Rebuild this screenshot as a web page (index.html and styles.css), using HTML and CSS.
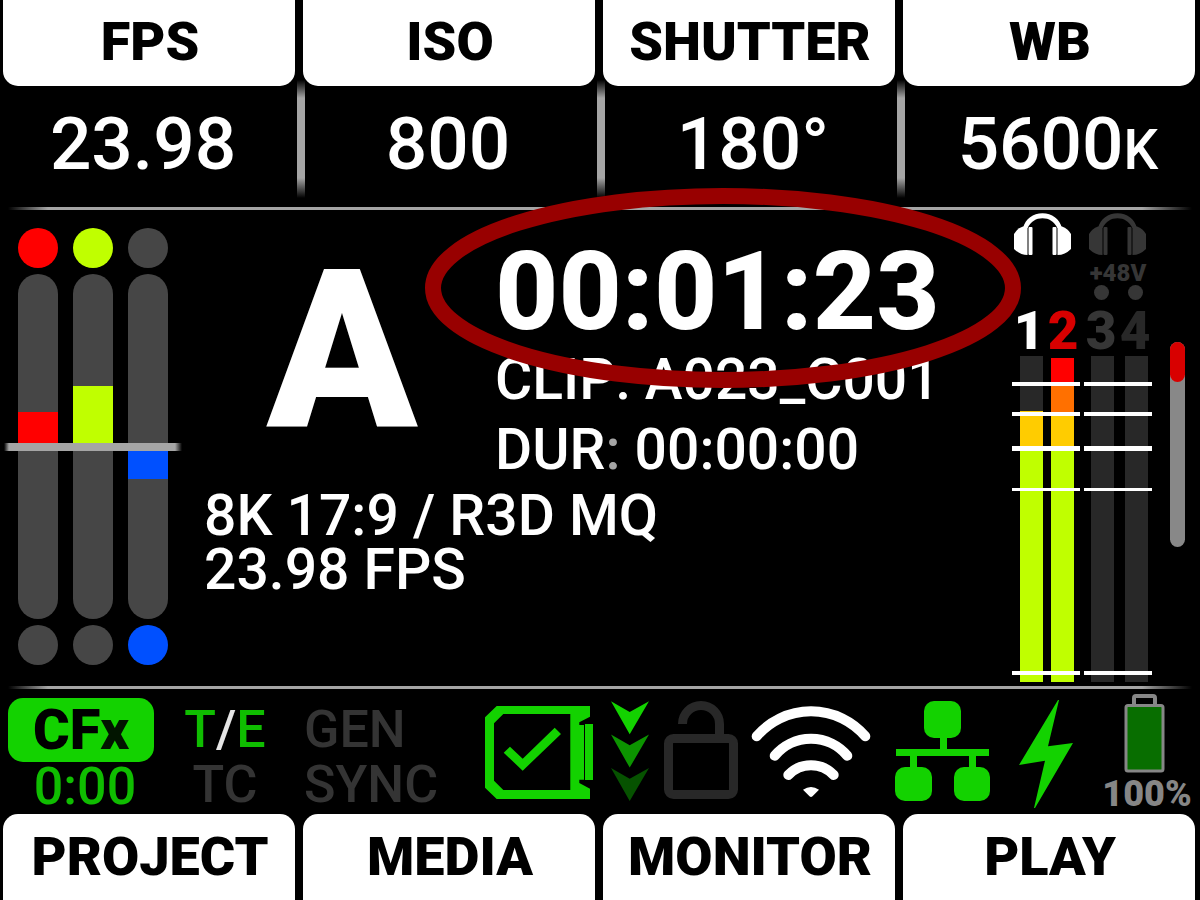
FILE: index.html
```html
<!DOCTYPE html>
<html lang="en">
<head>
  <meta charset="UTF-8" />
  <title>Camera Display</title>
  <link rel="stylesheet" href="styles.css">
</head>
<body>
  <header class="top">
    <nav class="tabs tabs-top">
      <button>FPS</button>
      <button>ISO</button>
      <button>SHUTTER</button>
      <button>WB</button>
    </nav>
    <div class="values">
      <div>23.98</div>
      <div>800</div>
      <div>180°</div>
      <div>5600<small>K</small></div>
    </div>
  </header>
  <div class="line"></div>

  <main>
    <!-- RGB exposure meters -->
    <section class="rgb">
      <div class="meter red">
        <span class="dot on"></span>
        <div class="track">
          <div class="half up"><i style="height: 20%"></i></div>
          <div class="half"></div>
        </div>
        <span class="dot"></span>
      </div>
      <div class="meter green">
        <span class="dot on"></span>
        <div class="track">
          <div class="half up"><i style="height: 35%"></i></div>
          <div class="half"></div>
        </div>
        <span class="dot"></span>
      </div>
      <div class="meter blue">
        <span class="dot"></span>
        <div class="track">
          <div class="half up"></div>
          <div class="half"><i style="height: 19%"></i></div>
        </div>
        <span class="dot on"></span>
      </div>
      <div class="zero"></div>
    </section>

    <section class="center">
      <div class="hero">
        <div class="camera">A</div>
        <div class="clip">
          <div class="timecode">00:01:23</div>
          <div>CLIP: A023_C001</div>
          <div>DUR<span class="dim">:</span> 00:00:00</div>
          <svg class="ring" viewBox="0 0 596 200">
            <ellipse cx="298" cy="100" rx="290" ry="92" fill="none" stroke="#980000" stroke-width="16" />
          </svg>
        </div>
      </div>
      <div class="format">8K 17:9 / R3D MQ<br>23.98 FPS</div>
    </section>

    <!-- audio levels -->
    <section class="audio">
      <div class="pair">
        <svg class="phones" viewBox="0 0 62 46" fill="currentColor">
          <path d="M11 18C13.5 9 21 3.3 30.5 3.3S47.5 9 50 18L45.5 18C42 11.5 37 8.3 30.5 8.3S19 11.5 15.5 18Z" />
          <path d="M2 24Q5 18.5 11 16.5L15.5 16V45Q8 45 2 39Z" />
          <path d="M59 24Q56 18.5 50 16.5L45.5 16V45Q53 45 59 39Z" />
          <rect x="16.5" y="17" width="4" height="28" rx="1" />
          <rect x="40.5" y="17" width="4" height="28" rx="1" />
        </svg>
        <div class="phantom"></div>
        <div class="nums"><span>1</span><span class="peak">2</span></div>
        <div class="bars">
          <div class="bar mid"></div>
          <div class="bar high"></div>
          <div class="ticks"><i></i><i></i><i></i><i></i><i></i></div>
        </div>
      </div>
      <div class="pair off">
        <svg class="phones" viewBox="0 0 62 46" fill="currentColor">
          <path d="M11 18C13.5 9 21 3.3 30.5 3.3S47.5 9 50 18L45.5 18C42 11.5 37 8.3 30.5 8.3S19 11.5 15.5 18Z" />
          <path d="M2 24Q5 18.5 11 16.5L15.5 16V45Q8 45 2 39Z" />
          <path d="M59 24Q56 18.5 50 16.5L45.5 16V45Q53 45 59 39Z" />
          <rect x="16.5" y="17" width="4" height="28" rx="1" />
          <rect x="40.5" y="17" width="4" height="28" rx="1" />
        </svg>
        <div class="phantom">
          +48V
          <div class="leds"><i></i><i></i></div>
        </div>
        <div class="nums"><span>3</span><span class="faint">4</span></div>
        <div class="bars">
          <div class="bar"></div>
          <div class="bar"></div>
          <div class="ticks"><i></i><i></i><i></i><i></i><i></i></div>
        </div>
      </div>
    </section>
    <div class="scroll"><div class="thumb"></div></div>
  </main>

  <div class="line"></div>
  <footer>
    <div class="status">
      <div class="storage">
        <div class="badge">CF<span>x</span></div>
        <div class="remain">0:00</div>
      </div>
      <div class="sync">
        <div class="te">T<span>/</span>E</div>
        <div class="gen">GEN</div>
        <div>TC</div>
        <div class="gen">SYNC</div>
      </div>
      <div class="icons">
        <!-- media card -->
        <svg width="114" height="115" viewBox="0 0 114 115" fill="#13d200">
          <path fill-rule="evenodd" d="M11.7 9H105V19.7L94.3 25.3V28H99V82.7H94.3V86L105 91.7V102H11.7L0 90.7V20.3ZM18.3 17L9 26.3V83.7L18.3 93H85.3V17Z" />
          <rect x="100" y="27" width="8" height="56" />
          <path d="M18.7 55.7L25 49.7L37.7 61.7L69.7 30.7L76 37L37.7 73.7Z" />
        </svg>
        <!-- data flow -->
        <svg width="40" height="115" viewBox="0 0 40 115">
          <path fill="#13d200" d="M0 4.3L18.7 15L38 4.3L18.7 37.3Z" />
          <path fill="#0c9400" d="M0 37.6L18.7 48.3L38 37.6L18.7 70.6Z" />
          <path fill="#065200" d="M0 71L18.7 81.7L38 71L18.7 104Z" />
        </svg>
        <!-- unlocked -->
        <svg width="76" height="115" viewBox="0 0 76 115" fill="none" stroke="#282828" stroke-width="9">
          <rect x="5.5" y="41.5" width="65" height="56" rx="5" />
          <path d="M19.5 27A18.5 18.5 0 0 1 56.5 27V41" />
        </svg>
        <!-- wifi -->
        <svg width="124" height="115" viewBox="0 0 124 115" fill="none" stroke="#fff" stroke-width="10" stroke-linecap="round">
          <path d="M5.7 39.3A71.5 71.5 0 0 1 114.3 39.3" />
          <path d="M23.7 58.7A47.3 47.3 0 0 1 96.3 58.7" />
          <path d="M37.3 78A31.4 31.4 0 0 1 82.7 78" />
          <path fill="#fff" stroke="none" d="M52 92.7Q60 87.3 68 92.7L61.5 99.3Q60 100.7 58.5 99.3Z" />
        </svg>
        <!-- network -->
        <svg width="112" height="115" viewBox="0 0 112 115" fill="#13d200">
          <rect x="37" y="4" width="37" height="37" rx="10" />
          <rect x="53" y="40" width="7" height="13" />
          <rect x="9" y="52" width="93" height="7" />
          <rect x="23" y="58" width="7" height="13" />
          <rect x="82" y="58" width="7" height="13" />
          <rect x="8" y="70" width="37" height="34" rx="10" />
          <rect x="67" y="70" width="36" height="34" rx="10" />
        </svg>
        <!-- power -->
        <svg width="74" height="115" viewBox="0 0 74 115" fill="#13d200">
          <path d="M47 3H48L37 49.3L62 46L24 111H23L34 63.7L8 68Z" />
        </svg>
        <div class="battery">
          <svg width="46" height="80" viewBox="0 0 46 80" stroke="#868686">
            <path d="M10 13V5Q10 3 12 3H29Q31 3 31 5V13" fill="none" stroke-width="4" />
            <rect x="2" y="12.5" width="37" height="65.5" rx="2" fill="#086e00" stroke-width="3" />
          </svg>
          <div>100%</div>
        </div>
      </div>
    </div>
    <nav class="tabs tabs-bottom">
      <button>PROJECT</button>
      <button>MEDIA</button>
      <button>MONITOR</button>
      <button>PLAY</button>
    </nav>
  </footer>
</body>
</html>
```
FILE: styles.css
```css
* {
  box-sizing: border-box;
}
body {
  margin: 0;
  min-height: 100vh;
  display: flex;
  flex-direction: column;
  background: #000;
  color: #fff;
  font-family: Roboto, sans-serif;
  font-weight: 500;
}
svg {
  display: block;
}

/* tabs */
.tabs {
  display: grid;
  grid-template-columns: repeat(4, 1fr);
  gap: 8px;
  padding: 0 5px 0 3px;
}
.tabs button {
  height: 86px;
  padding: 0 0 2px 2px;
  border: none;
  background: #fff;
  color: #000;
  font-family: inherit;
  font-size: 54px;
  font-weight: 900;
  cursor: pointer;
}
.tabs-top button {
  padding-bottom: 4px;
  border-radius: 0 0 15px 15px;
}
.tabs-bottom button {
  border-radius: 15px 15px 0 0;
}

/* values under the top tabs, with the faded dividers behind them */
.top {
  --fade: linear-gradient(transparent, #a5a5a5 18px, #a5a5a5 98px, transparent);
  background:
    var(--fade) calc(25% - 1px) 80px / 8px 118px no-repeat,
    var(--fade) calc(50% + 1px) 80px / 8px 118px no-repeat,
    var(--fade) calc(75% + 3px) 80px / 8px 118px no-repeat;
}
.values {
  display: grid;
  grid-template-columns: repeat(4, 1fr);
  gap: 25px;
  padding: 0 2px 5px 3px;
  font-size: 73px;
  line-height: 116px;
  text-align: center;
}
.values small {
  font-size: 55px;
  line-height: 1;
}
.line {
  height: 3px;
  margin: 0 8px;
  background: linear-gradient(to right, transparent, #a5a5a5 40px, #a5a5a5 calc(100% - 50px), transparent);
}

main {
  flex: 1;
  display: flex;
  padding: 0 15px 0 18px;
}

/* rgb meters */
.rgb {
  position: relative;
  display: flex;
  gap: 15px;
  padding: 18px 0 21px;
}
.meter {
  display: flex;
  flex-direction: column;
  gap: 6px;
  width: 40px;
}
.dot {
  height: 40px;
  border-radius: 50%;
  background: #464646;
}
.track {
  flex: 1;
  display: flex;
  flex-direction: column;
  border-radius: 20px;
  background: #464646;
  overflow: hidden;
}
.half {
  flex: 1;
  display: flex;
  flex-direction: column;
}
.half.up {
  justify-content: flex-end;
}
.red .on, .red i { background: #f00; }
.green .on, .green i { background: #c0ff00; }
.blue .on, .blue i { background: #0050ff; }
.zero {
  position: absolute;
  left: -14px;
  right: -14px;
  top: 233px;
  height: 8px;
  background: linear-gradient(to right, transparent, #a5a5a5 5px, #a5a5a5 calc(100% - 7px), transparent);
}

/* clip info */
.center {
  flex: 1;
  margin-left: 36px;
  padding-top: 32px;
  font-size: 57px;
  white-space: nowrap;
}
.hero {
  display: flex;
  gap: 15px;
}
.camera {
  width: 276px;
  font-size: 221px;
  font-weight: 900;
  line-height: 218px;
  text-align: center;
}
.clip {
  position: relative;
  line-height: 70px;
}
.timecode {
  margin-bottom: 3px;
  font-size: 110px;
  font-weight: 800;
  line-height: 100px;
}
.dim {
  color: #a5a5a5;
}
.ring {
  position: absolute;
  left: -70px;
  top: -54px;
  width: 596px;
  height: 200px;
}
.format {
  margin-top: 4px;
  line-height: 54px;
}

/* audio */
.audio {
  display: flex;
  gap: 4px;
}
.pair {
  width: 68px;
}
.pair.off {
  color: #363636;
}
.phones {
  width: 62px;
  height: 46px;
}
.off .phones {
  margin-left: 3px;
}
.phantom {
  height: 50px;
  padding-top: 5px;
  font-size: 24px;
  font-weight: 900;
  line-height: 24px;
  text-align: center;
}
.leds, .nums {
  display: grid;
  grid-template-columns: 1fr 1fr;
  justify-items: center;
}
.leds i {
  width: 15px;
  height: 15px;
  border-radius: 50%;
  background: currentColor;
}
.nums {
  font-size: 53px;
  font-weight: 900;
  line-height: 50px;
}
.peak {
  color: #d80000;
}
.faint {
  color: #282828;
}
.bars {
  position: relative;
  display: flex;
  gap: 8px;
  height: 326px;
  padding-left: 8px;
}
.off .bars {
  gap: 11px;
  padding-left: 7px;
}
.bar {
  width: 23px;
  background: #282828;
}
.bar.mid {
  background: linear-gradient(#282828 55px, #ffcc00 55px 93px, #c0ff00 93px);
}
.bar.high {
  background: linear-gradient(#000 2px, #f00 2px 28px, #ff7000 28px 58px, #ffcc00 58px 93px, #c0ff00 93px);
}
.ticks {
  position: absolute;
  inset: 0;
}
.ticks i {
  position: absolute;
  left: 0;
  right: 0;
  top: 26px;
  height: 4px;
  background: #fff;
}
.ticks i:nth-child(2) { top: 56px; }
.ticks i:nth-child(3) { top: 90px; height: 5px; }
.ticks i:nth-child(4) { top: 132px; height: 3px; }
.ticks i:nth-child(5) { top: 315px; }

.scroll {
  width: 15px;
  height: 205px;
  margin: 132px 0 0 18px;
  border-radius: 8px;
  background: #888;
}
.thumb {
  height: 40px;
  border-radius: 8px;
  background: #d80000;
}

/* status row */
.status {
  display: flex;
  align-items: flex-end;
  height: 125px;
  padding: 0 3px 2px 8px;
  font-size: 52px;
}
.storage {
  width: 146px;
  text-align: center;
}
.badge {
  border-radius: 15px;
  background: #13d200;
  color: #000;
  font-size: 56px;
  font-weight: 900;
  line-height: 64px;
}
.badge span {
  color: #021500;
}
.remain {
  padding-left: 8px;
  color: #0fbd00;
  line-height: 50px;
}
.sync {
  display: grid;
  grid-template-columns: 82px auto;
  column-gap: 38px;
  margin-left: 30px;
  color: #343434;
  line-height: 55px;
  text-align: center;
}
.sync .gen {
  text-align: left;
}
.te {
  color: #0fbd00;
}
.te span {
  color: #e6e6e6;
}
.icons {
  display: flex;
  align-items: flex-end;
  gap: 12px;
  margin-left: auto;
}
.battery {
  display: flex;
  flex-direction: column;
  align-items: center;
  gap: 4px;
  width: 100px;
  color: #868686;
  font-size: 36px;
  font-weight: 900;
  line-height: 35px;
}
```
